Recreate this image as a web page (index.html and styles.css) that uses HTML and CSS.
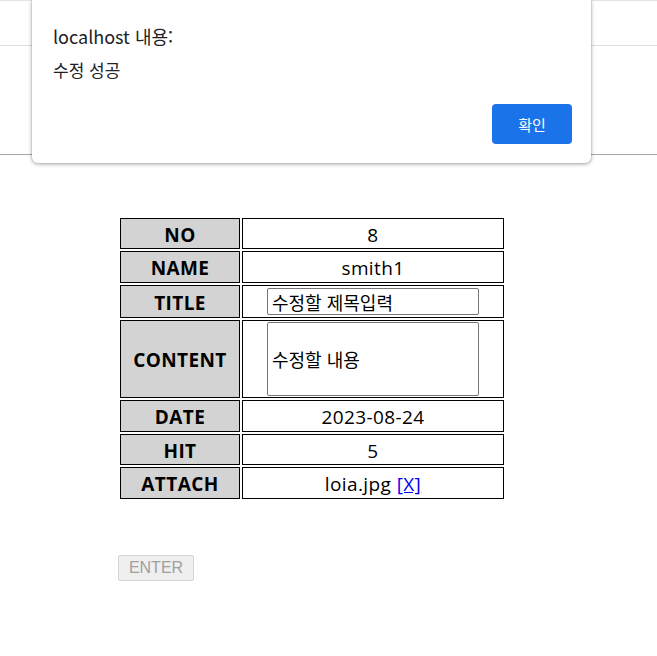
FILE: index.html
```html
<!DOCTYPE html>
<html lang="ko">
<head>
<meta charset="utf-8">
<title>수정</title>
<link rel="stylesheet" href="styles.css">
</head>
<body>
<div class="chrome">
  <div class="bar-top"></div>
  <div class="bar-bottom"></div>
</div>
<main class="page">
  <table class="board">
    <tr class="r31"><th>NO</th><td>8</td></tr>
    <tr class="r32"><th>NAME</th><td>smith1</td></tr>
    <tr class="r33"><th>TITLE</th><td class="has-field"><input class="field" type="text" value="수정할 제목입력"></td></tr>
    <tr class="r78"><th>CONTENT</th><td class="has-field"><input class="field tall" type="text" value="수정할 내용"></td></tr>
    <tr class="r32"><th>DATE</th><td>2023-08-24</td></tr>
    <tr class="r31"><th>HIT</th><td>5</td></tr>
    <tr class="r32"><th>ATTACH</th><td>loia.jpg <a href="#">[X]</a></td></tr>
  </table>
  <button class="enter" type="button" disabled>ENTER</button>
</main>
<div class="dialog">
  <div class="dlg-title">localhost 내용:</div>
  <div class="dlg-msg">수정 성공</div>
  <div class="dlg-actions"><button class="ok" type="button">확인</button></div>
</div>
</body>
</html>
```
FILE: styles.css
```css
html, body {
  margin: 0;
  padding: 0;
  background: #fff;
}
body {
  font-family: "Open Sans", "Noto Sans CJK KR", sans-serif;
  color: #000;
  width: 657px;
  height: 656px;
  overflow: hidden;
  position: relative;
}
.chrome {
  height: 155px;
  border-top: 1px solid #e3e3e3;
  box-sizing: border-box;
}
.bar-top {
  height: 44px;
  border-bottom: 1px solid #dcdcdc;
}
.bar-bottom {
  height: 108px;
  border-bottom: 1px solid #a6a6a6;
}
.page {
  padding: 61px 0 0 118px;
}
.board {
  border-collapse: separate;
  border-spacing: 2px;
  margin: 0;
  font-size: 19px;
  letter-spacing: 0.4px;
}
.board th, .board td {
  border: 1px solid #000;
  padding: 2px 0 0;
  text-align: center;
  vertical-align: middle;
  line-height: 24px;
}
.board td.has-field {
  padding: 0;
}
.board th {
  width: 118px;
  background: #d3d3d3;
  font-weight: 700;
}
.board td {
  width: 260px;
}
.r31 th, .r31 td { height: 27px; }
.r32 th, .r32 td { height: 28px; }
.r33 th { height: 29px; }
.r78 th { height: 74px; }
.r33 td.has-field { height: 31px; }
.r78 td.has-field { height: 76px; }
.board a {
  color: #0000ee;
  text-decoration: underline;
}
.field {
  display: block;
  margin: 0 auto;
  width: 212px;
  height: 27px;
  box-sizing: border-box;
  border: 1px solid #767676;
  border-radius: 2px;
  padding: 0 4px;
  font-family: "Noto Sans CJK KR", sans-serif;
  font-size: 18px;
  letter-spacing: 0;
  color: #000;
  background: #fff;
}
.field.tall {
  height: 74px;
}
.enter {
  display: block;
  margin-top: 54px;
  width: 76px;
  height: 26px;
  padding: 0;
  box-sizing: border-box;
  font-family: "Liberation Sans", Arial, sans-serif;
  font-size: 16px;
  color: #a0a0a0;
  background: #efefef;
  border: 1px solid #d4d4d4;
  border-radius: 2px;
}
.dialog {
  position: absolute;
  left: 32px;
  top: 0;
  width: 559px;
  height: 163px;
  box-sizing: border-box;
  background: #fff;
  border-radius: 0 0 6px 6px;
  box-shadow: 0 1px 4px rgba(0,0,0,0.35), 0 0 0 1px rgba(0,0,0,0.06);
  padding: 23px 19px 0 21px;
  font-family: "Noto Sans CJK KR", sans-serif;
}
.dlg-title {
  font-size: 18px;
  line-height: 26px;
  color: #202124;
}
.dlg-msg {
  margin-top: 10px;
  font-size: 17px;
  line-height: 22px;
  color: #202124;
}
.dlg-actions {
  display: flex;
  justify-content: flex-end;
  margin-top: 23px;
}
.ok {
  width: 80px;
  height: 40px;
  border: none;
  border-radius: 4px;
  background: #1a73e8;
  color: #fff;
  font-family: "Noto Sans CJK KR", sans-serif;
  font-size: 15px;
}
```
